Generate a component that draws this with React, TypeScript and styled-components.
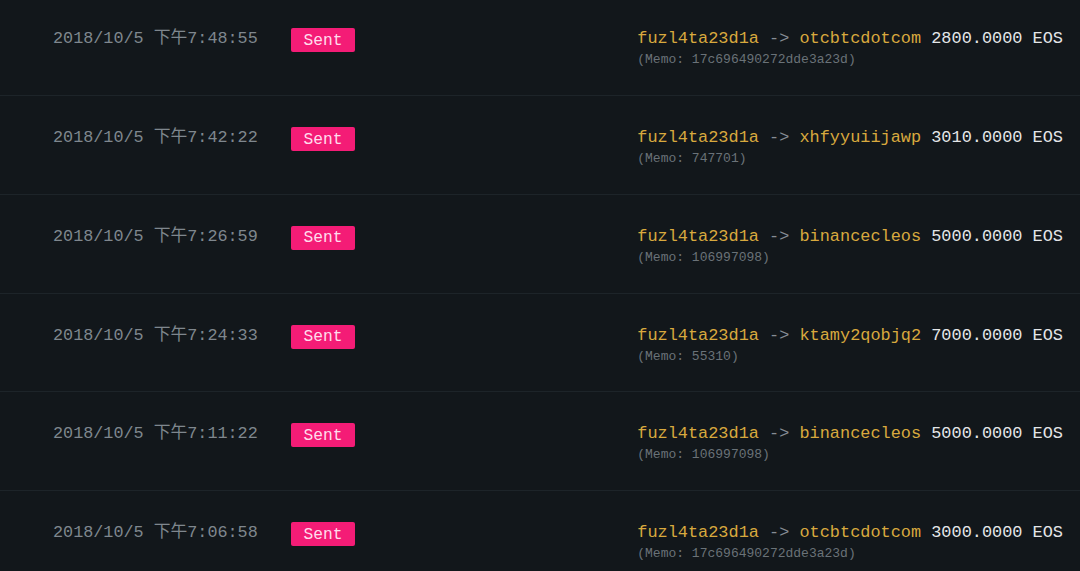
import React from 'react';
import styled, {createGlobalStyle} from 'styled-components';

type TransferType = {
	time: string
	to: string
	amount: string
	memo: string
}

const transfers: TransferType[] = [
	{time: '2018/10/5 下午7:48:55', to: 'otcbtcdotcom', amount: '2800.0000 EOS', memo: '17c696490272dde3a23d'},
	{time: '2018/10/5 下午7:42:22', to: 'xhfyyuiijawp', amount: '3010.0000 EOS', memo: '747701'},
	{time: '2018/10/5 下午7:26:59', to: 'binancecleos', amount: '5000.0000 EOS', memo: '106997098'},
	{time: '2018/10/5 下午7:24:33', to: 'ktamy2qobjq2', amount: '7000.0000 EOS', memo: '55310'},
	{time: '2018/10/5 下午7:11:22', to: 'binancecleos', amount: '5000.0000 EOS', memo: '106997098'},
	{time: '2018/10/5 下午7:06:58', to: 'otcbtcdotcom', amount: '3000.0000 EOS', memo: '17c696490272dde3a23d'},
];

const FROM = 'fuzl4ta23d1a';

const GlobalStyle = createGlobalStyle`
  html, body {
    margin: 0;
    padding: 0;
    background: #12171b;
    overflow: hidden;
  }
  body {
    font-family: "Liberation Mono", "Noto Sans CJK SC", monospace;
  }
`;

const List = styled.ul`
  list-style: none;
  margin: -2.75px 0 0;
  padding: 0;
`;

const Row = styled.li`
  display: flex;
  align-items: flex-start;
  box-sizing: border-box;
  height: 98.75px;
  padding: 30px 17px 0 53px;
  border-bottom: 1px solid #1d2429;
`;

const Time = styled.div`
  width: 238px;
  flex-shrink: 0;
  margin-top: 2px;
  font-size: 16.8px;
  line-height: 20px;
  color: #7f878e;
  white-space: pre;
`;

const Badge = styled.span`
  display: flex;
  align-items: center;
  justify-content: center;
  width: 64px;
  height: 24px;
  margin-top: 1px;
  border-radius: 2px;
  background: #f41c76;
  color: #ffdcec;
  font-size: 16.3px;
`;

const Info = styled.div`
  margin-left: auto;
  margin-top: 2px;
  display: flex;
  flex-direction: column;
`;

const Transfer = styled.div`
  font-size: 16.9px;
  line-height: 20px;
  white-space: pre;
`;

const Account = styled.span`
  color: #d8a93e;
`;

const Arrow = styled.span`
  color: #868d94;
`;

const Amount = styled.span`
  color: #e4e6e8;
`;

const Memo = styled.div`
  margin-top: 3px;
  font-size: 13px;
  line-height: 16px;
  color: #6a7278;
  white-space: pre;
`;

export default function App() {
	return (
		<>
			<GlobalStyle/>
			<List>
				{transfers.map((t, i) => (
					<Row key={i}>
						<Time>{t.time}</Time>
						<Badge>Sent</Badge>
						<Info>
							<Transfer>
								<Account>{FROM}</Account>
								<Arrow>{' -> '}</Arrow>
								<Account>{t.to}</Account>
								<Amount>{' ' + t.amount}</Amount>
							</Transfer>
							<Memo>{`(Memo: ${t.memo})`}</Memo>
						</Info>
					</Row>
				))}
			</List>
		</>
	);
}
